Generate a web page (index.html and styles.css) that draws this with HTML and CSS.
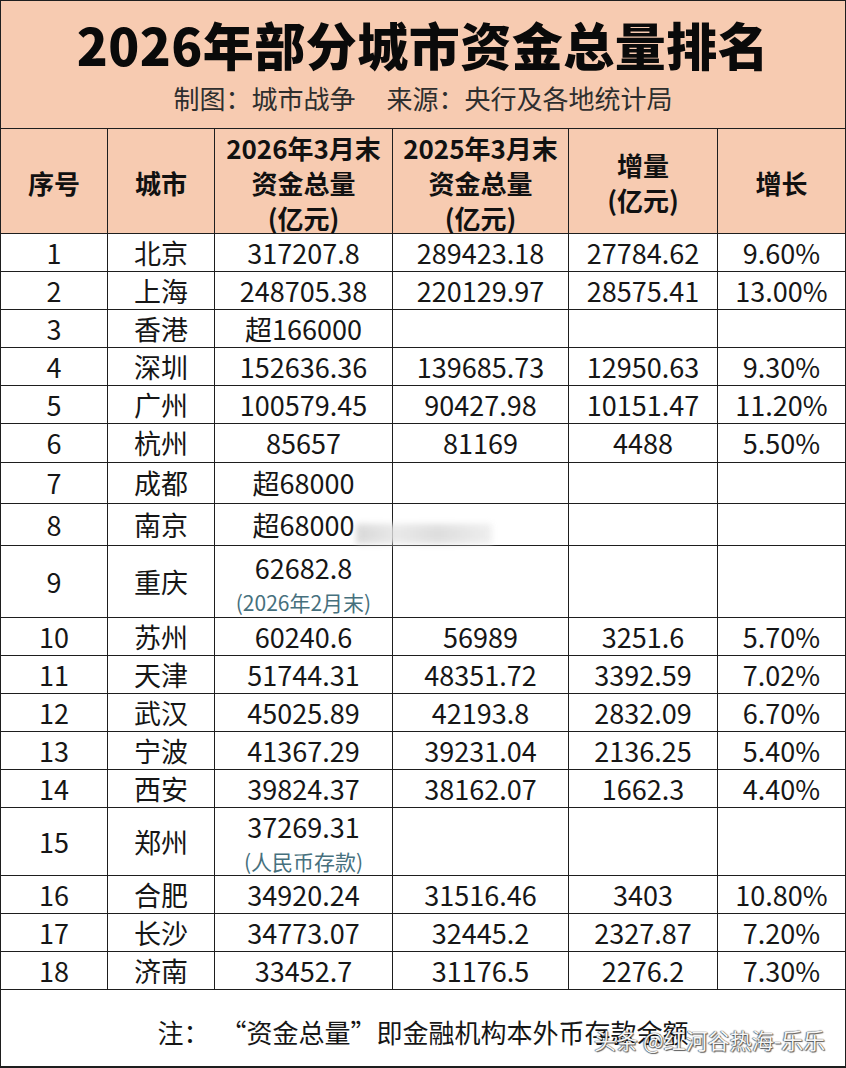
FILE: index.html
```html
<!DOCTYPE html>
<html lang="zh-CN">
<head>
<meta charset="utf-8">
<title>2026年部分城市资金总量排名</title>
<link rel="stylesheet" href="styles.css">
</head>
<body>
<div class="page">
  <div class="sheet">
    <header class="banner">
      <h1 class="title">2026年部分城市资金总量排名</h1>
      <p class="subtitle"><span>制图：城市战争</span><span>来源：央行及各地统计局</span></p>
    </header>

    <div class="row head">
      <div class="cell">序号</div>
      <div class="cell">城市</div>
      <div class="cell">2026年3月末<br>资金总量<br>(亿元)</div>
      <div class="cell">2025年3月末<br>资金总量<br>(亿元)</div>
      <div class="cell">增量<br>(亿元)</div>
      <div class="cell">增长</div>
    </div>

    <div class="row"><div class="cell">1</div><div class="cell">北京</div><div class="cell">317207.8</div><div class="cell">289423.18</div><div class="cell">27784.62</div><div class="cell">9.60%</div></div>
    <div class="row"><div class="cell">2</div><div class="cell">上海</div><div class="cell">248705.38</div><div class="cell">220129.97</div><div class="cell">28575.41</div><div class="cell">13.00%</div></div>
    <div class="row"><div class="cell">3</div><div class="cell">香港</div><div class="cell">超166000</div><div class="cell"></div><div class="cell"></div><div class="cell"></div></div>
    <div class="row"><div class="cell">4</div><div class="cell">深圳</div><div class="cell">152636.36</div><div class="cell">139685.73</div><div class="cell">12950.63</div><div class="cell">9.30%</div></div>
    <div class="row"><div class="cell">5</div><div class="cell">广州</div><div class="cell">100579.45</div><div class="cell">90427.98</div><div class="cell">10151.47</div><div class="cell">11.20%</div></div>
    <div class="row r38"><div class="cell">6</div><div class="cell">杭州</div><div class="cell">85657</div><div class="cell">81169</div><div class="cell">4488</div><div class="cell">5.50%</div></div>
    <div class="row r40"><div class="cell">7</div><div class="cell">成都</div><div class="cell">超68000</div><div class="cell"></div><div class="cell"></div><div class="cell"></div></div>
    <div class="row r41"><div class="cell">8</div><div class="cell">南京</div><div class="cell">超68000</div><div class="cell"></div><div class="cell"></div><div class="cell"></div></div>
    <div class="row r71"><div class="cell">9</div><div class="cell">重庆</div><div class="cell stack s5"><span>62682.8</span><span class="sub">(2026年2月末)</span></div><div class="cell"></div><div class="cell"></div><div class="cell"></div></div>
    <div class="row"><div class="cell">10</div><div class="cell">苏州</div><div class="cell">60240.6</div><div class="cell">56989</div><div class="cell">3251.6</div><div class="cell">5.70%</div></div>
    <div class="row"><div class="cell">11</div><div class="cell">天津</div><div class="cell">51744.31</div><div class="cell">48351.72</div><div class="cell">3392.59</div><div class="cell">7.02%</div></div>
    <div class="row"><div class="cell">12</div><div class="cell">武汉</div><div class="cell">45025.89</div><div class="cell">42193.8</div><div class="cell">2832.09</div><div class="cell">6.70%</div></div>
    <div class="row"><div class="cell">13</div><div class="cell">宁波</div><div class="cell">41367.29</div><div class="cell">39231.04</div><div class="cell">2136.25</div><div class="cell">5.40%</div></div>
    <div class="row"><div class="cell">14</div><div class="cell">西安</div><div class="cell">39824.37</div><div class="cell">38162.07</div><div class="cell">1662.3</div><div class="cell">4.40%</div></div>
    <div class="row r67"><div class="cell">15</div><div class="cell">郑州</div><div class="cell stack s2"><span>37269.31</span><span class="sub">(人民币存款)</span></div><div class="cell"></div><div class="cell"></div><div class="cell"></div></div>
    <div class="row"><div class="cell">16</div><div class="cell">合肥</div><div class="cell">34920.24</div><div class="cell">31516.46</div><div class="cell">3403</div><div class="cell">10.80%</div></div>
    <div class="row"><div class="cell">17</div><div class="cell">长沙</div><div class="cell">34773.07</div><div class="cell">32445.2</div><div class="cell">2327.87</div><div class="cell">7.20%</div></div>
    <div class="row"><div class="cell">18</div><div class="cell">济南</div><div class="cell">33452.7</div><div class="cell">31176.5</div><div class="cell">2276.2</div><div class="cell">7.30%</div></div>

    <footer class="note"><span>注：</span><span>“资金总量”即金融机构本外币存款余额</span></footer>
  </div>
  <div class="smudge"></div>
  <div class="watermark">头条 @红河谷热海-乐乐</div>
</div>
</body>
</html>
```

FILE: styles.css
```css
html, body {
  margin: 0;
  padding: 0;
  background: #ffffff;
}

.page {
  position: relative;
  width: 846px;
  height: 1068px;
  overflow: hidden;
  font-family: "Noto Sans CJK SC", "Noto Sans", sans-serif;
  color: #161616;
}

.sheet {
  display: flex;
  flex-direction: column;
  gap: 1px;
  padding: 1px 1px 2px 1px;
  background: #1e1e1e;
  height: 1068px;
  box-sizing: border-box;
}

.sheet > * {
  flex-shrink: 0;
}

.banner {
  height: 127px;
  background: #f7cbb1;
  display: flex;
  flex-direction: column;
  align-items: center;
  box-sizing: border-box;
  padding-top: 13px;
}

.title {
  margin: 0;
  font-size: 51px;
  line-height: 60px;
  font-weight: 900;
  color: #0a0a0a;
  letter-spacing: 0.5px;
}

.subtitle {
  margin: 7px 0 0 0;
  display: flex;
  gap: 31px;
  font-size: 26px;
  line-height: 34px;
  color: #2e2e2e;
}

.row {
  display: grid;
  grid-template-columns: 106px 106px 177px 175px 148px 127px;
  grid-template-rows: 100%;
  gap: 1px;
  height: 37px;
}

.row.r38 { height: 38px; }
.row.r40 { height: 40px; }
.row.r41 { height: 41px; }
.row.r71 { height: 71px; }
.row.r67 { height: 67px; }

.cell {
  min-height: 0;
  background: #ffffff;
  display: flex;
  align-items: center;
  justify-content: center;
  text-align: center;
  font-size: 27px;
  line-height: 34px;
  white-space: nowrap;
}

.row.head {
  height: 104px;
}

.row.head .cell {
  background: #f7cbb1;
  font-size: 26px;
  font-weight: 700;
  line-height: 35px;
  color: #111111;
  padding-top: 2px;
}

.cell.stack {
  flex-direction: column;
  justify-content: flex-start;
}

.cell.stack.s5 { padding-top: 5px; }
.cell.stack.s2 { padding-top: 2px; }

.sub {
  font-size: 21px;
  line-height: 34px;
  color: #46707d;
}

.note {
  height: 76px;
  background: #ffffff;
  display: flex;
  align-items: center;
  justify-content: center;
  gap: 11px;
  font-size: 26px;
  padding-top: 7px;
  box-sizing: border-box;
  color: #161616;
}

.smudge {
  position: absolute;
  left: 356px;
  top: 524px;
  width: 136px;
  height: 20px;
  background: linear-gradient(90deg, #cfcfcf, #e4e4e4 30%, #d6d6d6 60%, #ebebeb);
  filter: blur(3px);
  opacity: 0.8;
}

.watermark {
  position: absolute;
  left: 594px;
  top: 1025px;
  font-size: 22px;
  line-height: 28px;
  color: #f6f6f6;
  white-space: nowrap;
  text-shadow: 0 0 1px #222, 1px 1px 1px rgba(0, 0, 0, 0.6), -1px 0 1px rgba(0, 0, 0, 0.4);
}
```
